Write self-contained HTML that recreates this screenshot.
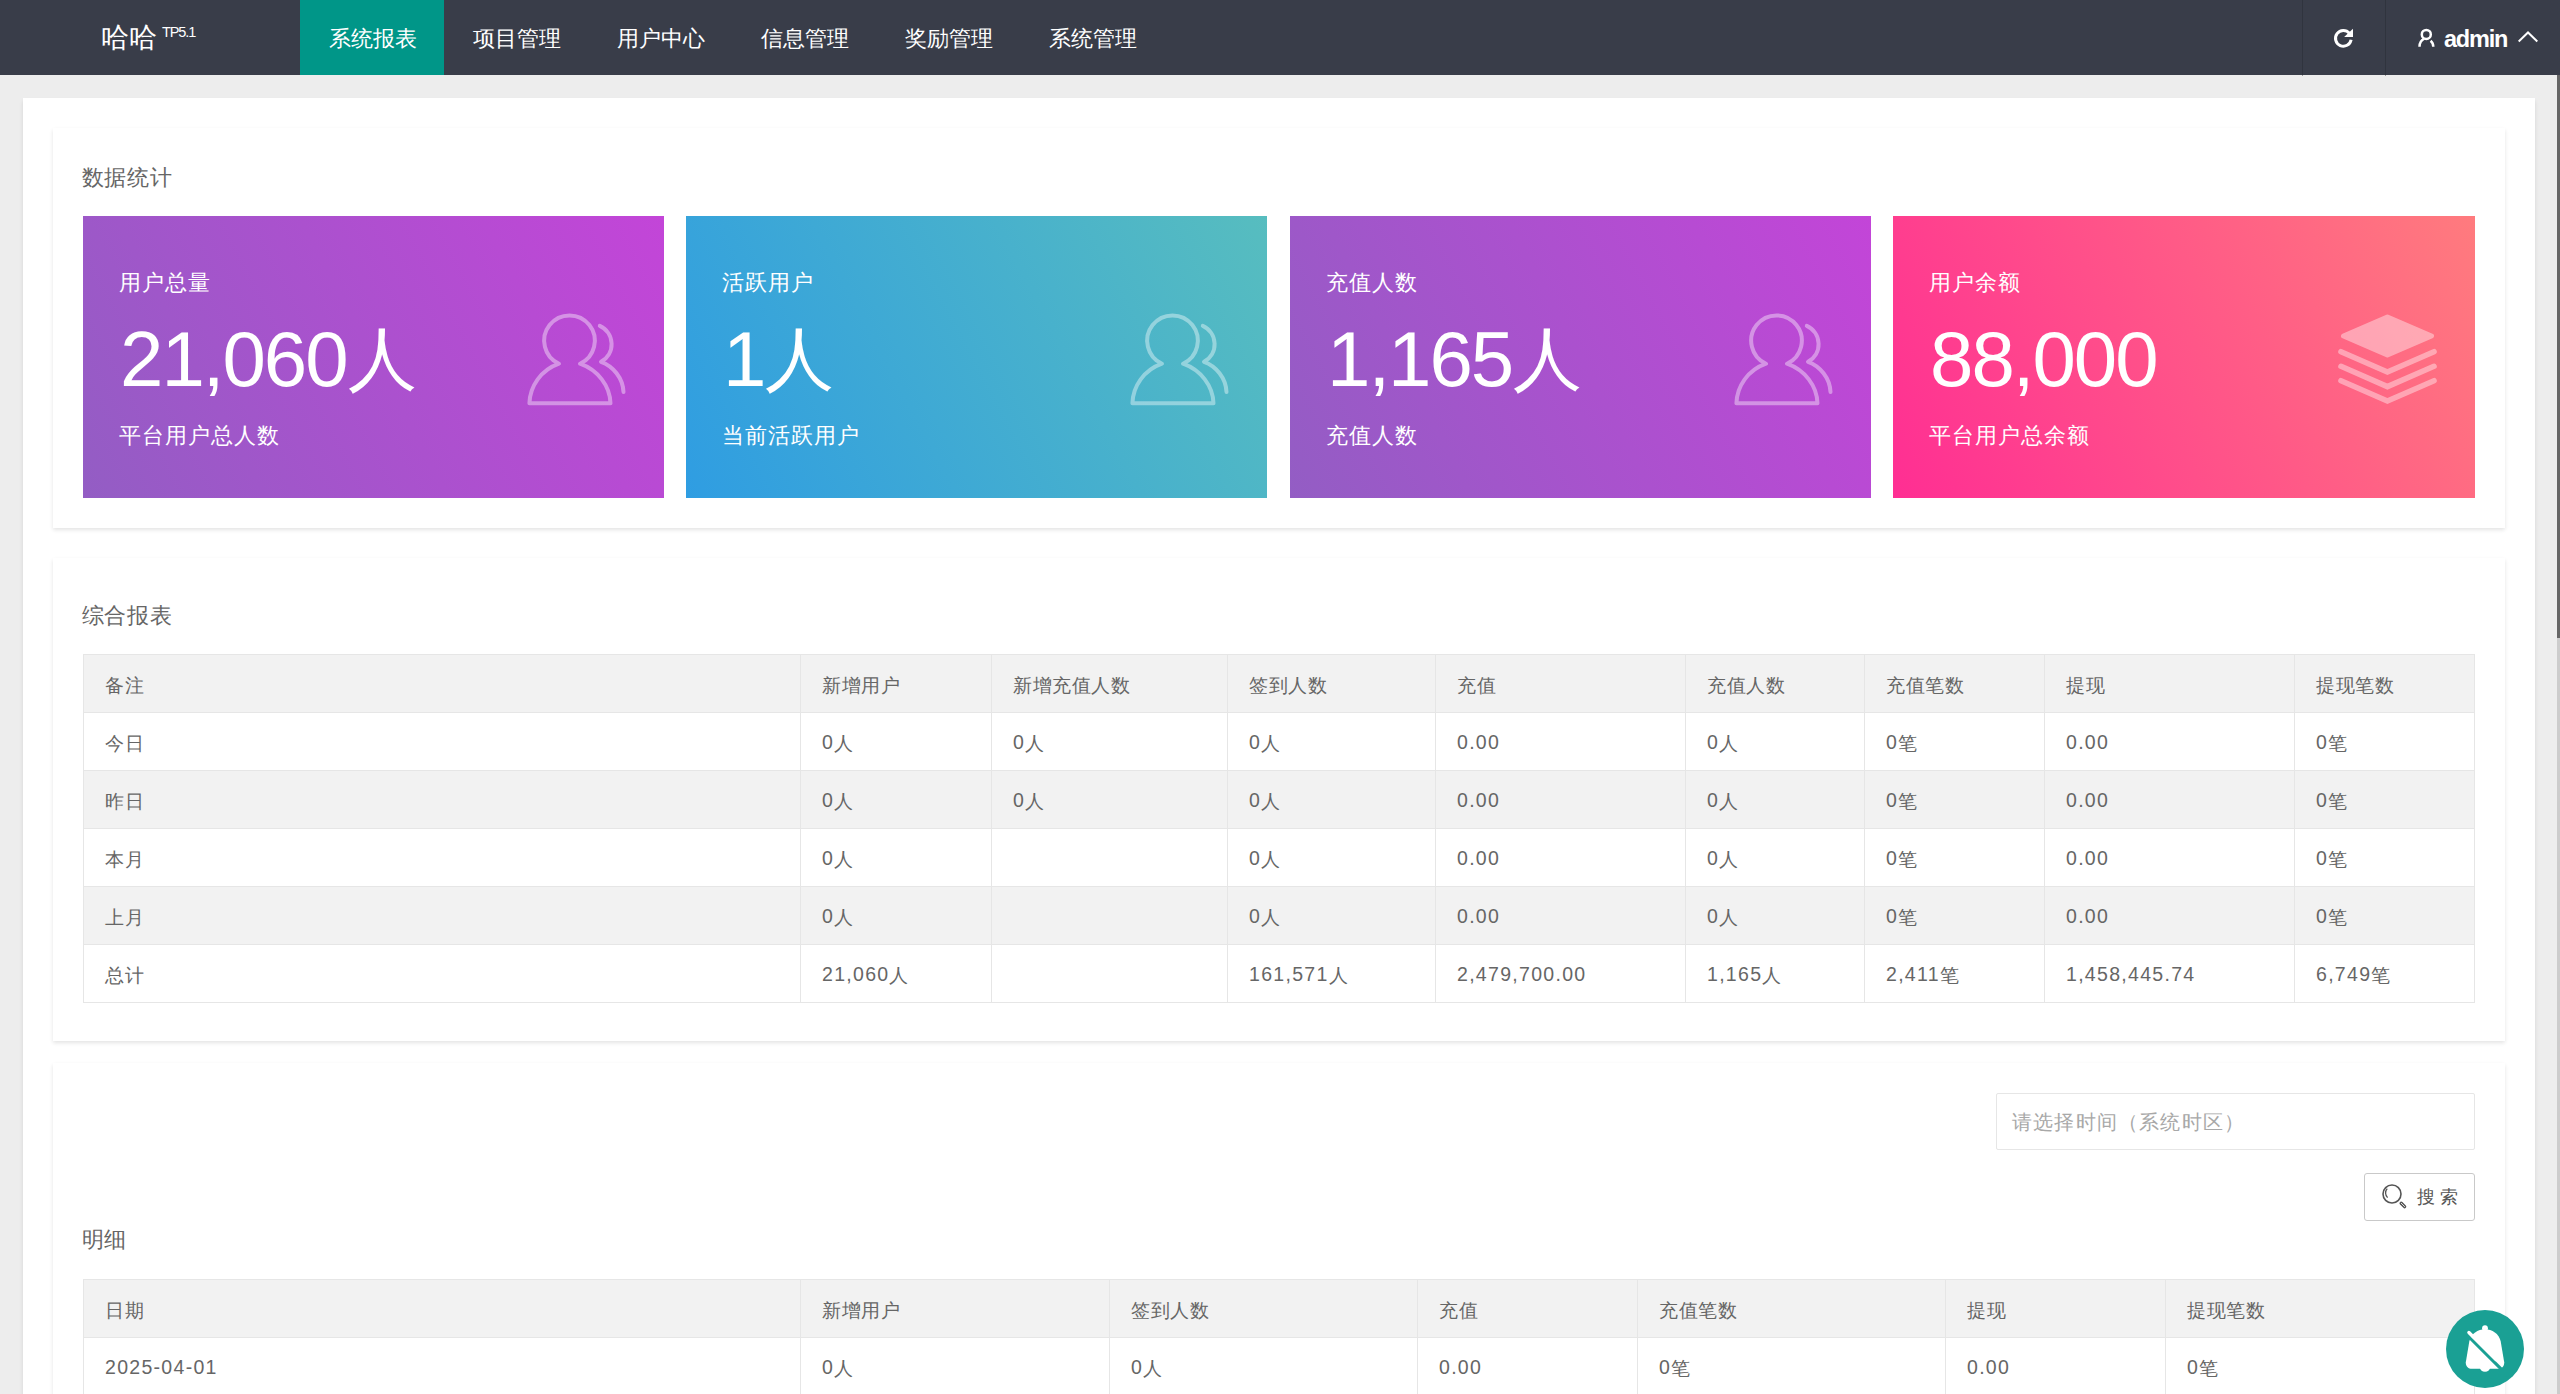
<!DOCTYPE html><html><head><meta charset="utf-8"><style>
*{margin:0;padding:0;box-sizing:border-box}
html,body{width:2560px;height:1394px;overflow:hidden;background:#EDEDED;font-family:"Liberation Sans",sans-serif;color:#666}
div{position:absolute;white-space:nowrap}
.hdr{left:0;top:0;width:2560px;height:75px;background:#393D49}
.logo{left:101px;top:20px;font-size:27.5px;line-height:36px;color:#fff}
.sup{left:162px;top:21.5px;font-size:14.5px;line-height:20px;color:#fff;letter-spacing:-1.1px}
.nav{top:0;height:75px;width:144px;color:#fff;font-size:21.5px;line-height:78px;padding-left:29px}
.on{background:#009688}
.sep{top:0;width:1px;height:75px;background:#30343E}
.cont{left:23px;top:98px;width:2512px;height:1400px;background:#fff;box-shadow:0 3px 4px rgba(0,0,0,.1)}
.card{left:53px;width:2452px;background:#fff;box-shadow:0 2px 4px rgba(0,0,0,.11)}
.ttl{left:81.5px;font-size:22px;line-height:30px;color:#666;letter-spacing:.8px}
.box{top:216px;width:581px;height:282px;color:#fff;overflow:hidden}
.l1{left:36px;top:51.5px;font-size:22px;line-height:30px;letter-spacing:1px}
.num{left:37px;top:93px;font-size:78px;line-height:100px;letter-spacing:-2px}
.ren{font-size:69px;letter-spacing:0;position:relative;top:-3px;margin-left:1px}
.l2{left:36px;top:204.5px;font-size:22px;line-height:30px;letter-spacing:1px}
.hl{height:1px;background:#E6E6E6}
.vl{width:1px;background:#E6E6E6}
.rg{background:#F2F2F2}
.tc{font-size:19px;letter-spacing:.5px;line-height:61px;height:57px;color:#666}
.dg{font-size:19.5px;letter-spacing:1.3px;position:relative;top:-1px}
</style></head><body>
<div class="hdr"></div>
<div class="logo">哈哈</div><div class="sup">TP5.1</div>
<div class="nav on" style="left:300px">系统报表</div>
<div class="nav" style="left:444px">项目管理</div>
<div class="nav" style="left:588px">用户中心</div>
<div class="nav" style="left:732px">信息管理</div>
<div class="nav" style="left:876px">奖励管理</div>
<div class="nav" style="left:1020px">系统管理</div>
<div class="sep" style="left:2302px"></div><div class="sep" style="left:2385px"></div>
<div style="left:2302px;top:75px;width:1px;height:1px;background:#9a9a9a"></div><div style="left:2385px;top:75px;width:1px;height:1px;background:#9a9a9a"></div>
<div class="cont"></div>
<div class="card" style="top:128px;height:400px"></div>
<div class="card" style="top:558px;height:483px"></div>
<div class="card" style="top:1063px;height:400px"></div>
<div class="ttl" style="top:163px">数据统计</div>
<div class="box" style="left:83px;background:linear-gradient(62deg,#935DC4,#C345D8)"><div class="l1">用户总量</div><div class="num">21,060<span class=ren>人</span></div><div class="l2">平台用户总人数</div></div>
<div class="box" style="left:686px;background:linear-gradient(62deg,#2F9DE2,#57BDBF)"><div class="l1">活跃用户</div><div class="num">1<span class=ren>人</span></div><div class="l2">当前活跃用户</div></div>
<div class="box" style="left:1290px;background:linear-gradient(62deg,#935DC4,#C345D8)"><div class="l1">充值人数</div><div class="num">1,165<span class=ren>人</span></div><div class="l2">充值人数</div></div>
<div class="box" style="left:1893px;width:582px;background:linear-gradient(62deg,#FF2E93,#FF7B7E)"><div class="l1">用户余额</div><div class="num">88,000</div><div class="l2">平台用户总余额</div></div>
<div class="ttl" style="top:601px">综合报表</div>
<div class="rg" style="left:83px;top:654px;width:2392px;height:58px"></div>
<div class="rg" style="left:83px;top:770px;width:2392px;height:58px"></div>
<div class="rg" style="left:83px;top:886px;width:2392px;height:58px"></div>
<div class="hl" style="left:83px;top:654px;width:2392px"></div>
<div class="hl" style="left:83px;top:712px;width:2392px"></div>
<div class="hl" style="left:83px;top:770px;width:2392px"></div>
<div class="hl" style="left:83px;top:828px;width:2392px"></div>
<div class="hl" style="left:83px;top:886px;width:2392px"></div>
<div class="hl" style="left:83px;top:944px;width:2392px"></div>
<div class="hl" style="left:83px;top:1002px;width:2392px"></div>
<div class="vl" style="left:83px;top:654px;height:349px"></div>
<div class="vl" style="left:800px;top:654px;height:349px"></div>
<div class="vl" style="left:991px;top:654px;height:349px"></div>
<div class="vl" style="left:1227px;top:654px;height:349px"></div>
<div class="vl" style="left:1435px;top:654px;height:349px"></div>
<div class="vl" style="left:1685px;top:654px;height:349px"></div>
<div class="vl" style="left:1864px;top:654px;height:349px"></div>
<div class="vl" style="left:2044px;top:654px;height:349px"></div>
<div class="vl" style="left:2294px;top:654px;height:349px"></div>
<div class="vl" style="left:2474px;top:654px;height:349px"></div>
<div class="tc" style="left:105px;top:655px">备注</div>
<div class="tc" style="left:822px;top:655px">新增用户</div>
<div class="tc" style="left:1013px;top:655px">新增充值人数</div>
<div class="tc" style="left:1249px;top:655px">签到人数</div>
<div class="tc" style="left:1457px;top:655px">充值</div>
<div class="tc" style="left:1707px;top:655px">充值人数</div>
<div class="tc" style="left:1886px;top:655px">充值笔数</div>
<div class="tc" style="left:2066px;top:655px">提现</div>
<div class="tc" style="left:2316px;top:655px">提现笔数</div>
<div class="tc" style="left:105px;top:713px">今日</div>
<div class="tc" style="left:822px;top:713px"><span class="dg">0</span>人</div>
<div class="tc" style="left:1013px;top:713px"><span class="dg">0</span>人</div>
<div class="tc" style="left:1249px;top:713px"><span class="dg">0</span>人</div>
<div class="tc" style="left:1457px;top:713px"><span class="dg">0.00</span></div>
<div class="tc" style="left:1707px;top:713px"><span class="dg">0</span>人</div>
<div class="tc" style="left:1886px;top:713px"><span class="dg">0</span>笔</div>
<div class="tc" style="left:2066px;top:713px"><span class="dg">0.00</span></div>
<div class="tc" style="left:2316px;top:713px"><span class="dg">0</span>笔</div>
<div class="tc" style="left:105px;top:771px">昨日</div>
<div class="tc" style="left:822px;top:771px"><span class="dg">0</span>人</div>
<div class="tc" style="left:1013px;top:771px"><span class="dg">0</span>人</div>
<div class="tc" style="left:1249px;top:771px"><span class="dg">0</span>人</div>
<div class="tc" style="left:1457px;top:771px"><span class="dg">0.00</span></div>
<div class="tc" style="left:1707px;top:771px"><span class="dg">0</span>人</div>
<div class="tc" style="left:1886px;top:771px"><span class="dg">0</span>笔</div>
<div class="tc" style="left:2066px;top:771px"><span class="dg">0.00</span></div>
<div class="tc" style="left:2316px;top:771px"><span class="dg">0</span>笔</div>
<div class="tc" style="left:105px;top:829px">本月</div>
<div class="tc" style="left:822px;top:829px"><span class="dg">0</span>人</div>
<div class="tc" style="left:1249px;top:829px"><span class="dg">0</span>人</div>
<div class="tc" style="left:1457px;top:829px"><span class="dg">0.00</span></div>
<div class="tc" style="left:1707px;top:829px"><span class="dg">0</span>人</div>
<div class="tc" style="left:1886px;top:829px"><span class="dg">0</span>笔</div>
<div class="tc" style="left:2066px;top:829px"><span class="dg">0.00</span></div>
<div class="tc" style="left:2316px;top:829px"><span class="dg">0</span>笔</div>
<div class="tc" style="left:105px;top:887px">上月</div>
<div class="tc" style="left:822px;top:887px"><span class="dg">0</span>人</div>
<div class="tc" style="left:1249px;top:887px"><span class="dg">0</span>人</div>
<div class="tc" style="left:1457px;top:887px"><span class="dg">0.00</span></div>
<div class="tc" style="left:1707px;top:887px"><span class="dg">0</span>人</div>
<div class="tc" style="left:1886px;top:887px"><span class="dg">0</span>笔</div>
<div class="tc" style="left:2066px;top:887px"><span class="dg">0.00</span></div>
<div class="tc" style="left:2316px;top:887px"><span class="dg">0</span>笔</div>
<div class="tc" style="left:105px;top:945px">总计</div>
<div class="tc" style="left:822px;top:945px"><span class="dg">21,060</span>人</div>
<div class="tc" style="left:1249px;top:945px"><span class="dg">161,571</span>人</div>
<div class="tc" style="left:1457px;top:945px"><span class="dg">2,479,700.00</span></div>
<div class="tc" style="left:1707px;top:945px"><span class="dg">1,165</span>人</div>
<div class="tc" style="left:1886px;top:945px"><span class="dg">2,411</span>笔</div>
<div class="tc" style="left:2066px;top:945px"><span class="dg">1,458,445.74</span></div>
<div class="tc" style="left:2316px;top:945px"><span class="dg">6,749</span>笔</div>
<div class="ttl" style="top:1225px">明细</div>
<div class="rg" style="left:83px;top:1279px;width:2392px;height:58px"></div>
<div class="hl" style="left:83px;top:1279px;width:2392px"></div>
<div class="hl" style="left:83px;top:1337px;width:2392px"></div>
<div class="vl" style="left:83px;top:1279px;height:116px"></div>
<div class="vl" style="left:800px;top:1279px;height:116px"></div>
<div class="vl" style="left:1109px;top:1279px;height:116px"></div>
<div class="vl" style="left:1417px;top:1279px;height:116px"></div>
<div class="vl" style="left:1637px;top:1279px;height:116px"></div>
<div class="vl" style="left:1945px;top:1279px;height:116px"></div>
<div class="vl" style="left:2165px;top:1279px;height:116px"></div>
<div class="vl" style="left:2474px;top:1279px;height:116px"></div>
<div class="tc" style="left:105px;top:1280px">日期</div>
<div class="tc" style="left:822px;top:1280px">新增用户</div>
<div class="tc" style="left:1131px;top:1280px">签到人数</div>
<div class="tc" style="left:1439px;top:1280px">充值</div>
<div class="tc" style="left:1659px;top:1280px">充值笔数</div>
<div class="tc" style="left:1967px;top:1280px">提现</div>
<div class="tc" style="left:2187px;top:1280px">提现笔数</div>
<div class="tc" style="left:105px;top:1338px"><span class="dg">2025-04-01</span></div>
<div class="tc" style="left:822px;top:1338px"><span class="dg">0</span>人</div>
<div class="tc" style="left:1131px;top:1338px"><span class="dg">0</span>人</div>
<div class="tc" style="left:1439px;top:1338px"><span class="dg">0.00</span></div>
<div class="tc" style="left:1659px;top:1338px"><span class="dg">0</span>笔</div>
<div class="tc" style="left:1967px;top:1338px"><span class="dg">0.00</span></div>
<div class="tc" style="left:2187px;top:1338px"><span class="dg">0</span>笔</div>
<svg style="position:absolute;left:0;top:0" width="2560" height="75"><path d="M2351.1,39.7 A7.85,7.85 0 1 1 2349.4,33.3" fill="none" stroke="#fff" stroke-width="3"/><path d="M2353,28.8 L2353,37.1 L2344.1,37.1 Z" fill="#fff"/><circle cx="2426.3" cy="34.4" r="4.5" fill="none" stroke="#fff" stroke-width="2.5"/><path d="M2419.5,46.8 C2419.5,43.2 2421.2,40.3 2424.2,38.7 M2430.6,40.7 C2432.4,42.2 2433.3,44.3 2433.3,46.8" fill="none" stroke="#fff" stroke-width="2.5"/><path d="M2518.7,41.5 L2528,32.5 L2537.3,41.5" fill="none" stroke="#fff" stroke-width="2"/></svg>
<div style="left:2444px;top:23.5px;font-size:23.5px;line-height:30px;font-weight:bold;color:#fff;letter-spacing:-1.2px">admin</div>
<svg style="position:absolute;left:83px;top:216px" width="581" height="282"><g fill="none" stroke="rgba(255,255,255,.4)" stroke-width="4" stroke-linecap="round" stroke-linejoin="round"><path d="M476,147.7 A25.3,25.3 0 1 1 497,147.7 C515,154 527,170 527.5,187.3 L446.4,187.3 C447,170 458,154 476,147.7 Z" /><path d="M516.8,109.9 A20,20 0 0 1 518,145.8 C530,150 540,162 540.5,176" /></g></svg>
<svg style="position:absolute;left:686px;top:216px" width="581" height="282"><g fill="none" stroke="rgba(255,255,255,.4)" stroke-width="4" stroke-linecap="round" stroke-linejoin="round"><path d="M476,147.7 A25.3,25.3 0 1 1 497,147.7 C515,154 527,170 527.5,187.3 L446.4,187.3 C447,170 458,154 476,147.7 Z" /><path d="M516.8,109.9 A20,20 0 0 1 518,145.8 C530,150 540,162 540.5,176" /></g></svg>
<svg style="position:absolute;left:1290px;top:216px" width="581" height="282"><g fill="none" stroke="rgba(255,255,255,.4)" stroke-width="4" stroke-linecap="round" stroke-linejoin="round"><path d="M476,147.7 A25.3,25.3 0 1 1 497,147.7 C515,154 527,170 527.5,187.3 L446.4,187.3 C447,170 458,154 476,147.7 Z" /><path d="M516.8,109.9 A20,20 0 0 1 518,145.8 C530,150 540,162 540.5,176" /></g></svg>
<svg style="position:absolute;left:1893px;top:216px" width="581" height="282"><g opacity=".4"><path d="M450.5,120 L494.4,101 L538.5,120 L494.4,139 Z" fill="#fff" stroke="#fff" stroke-width="5" stroke-linejoin="round"/><path d="M448,135.7 L494.4,156 L541,135.7 M448,150.3 L494.4,170.6 L541,150.3 M448,164.7 L494.4,185 L541,164.7" fill="none" stroke="#fff" stroke-width="5.6" stroke-linecap="round"/></g></svg>
<div style="left:1996px;top:1093px;width:479px;height:57px;border:1px solid #E6E6E6;border-radius:2px;background:#fff"></div>
<div style="left:2012px;top:1107px;font-size:20px;line-height:30px;color:#A8A8A8;letter-spacing:1.2px">请选择时间（系统时区）</div>
<div style="left:2364px;top:1173px;width:111px;height:48px;border:1px solid #C9C9C9;border-radius:3px;background:#fff"></div>
<svg style="position:absolute;left:2364px;top:1173px" width="111" height="48"><circle cx="28" cy="21" r="9" fill="none" stroke="#555" stroke-width="1.6"/><path d="M37.2,30.2 L40.6,33.6" stroke="#555" stroke-width="3.4" stroke-linecap="round"/><path d="M37.2,30.2 L40.6,33.6" stroke="#fff" stroke-width="0.8" stroke-linecap="round"/><path d="M23.2,15.6 A6.5,6.5 0 0 0 23.6,24.6" fill="none" stroke="#555" stroke-width="1.3"/></svg>
<div style="left:2417px;top:1182px;font-size:18px;line-height:30px;color:#555;letter-spacing:5.4px">搜索</div>
<svg style="position:absolute;left:2446px;top:1310px" width="78" height="78"><circle cx="39" cy="39" r="39" fill="#1AA094"/><circle cx="39" cy="18.2" r="2.9" fill="#fff"/><path d="M39,19.2 C46,19.2 53,23.5 54.7,31.4 L58.2,52.3 C58.5,55 56.5,58.7 53.5,58.7 L24.5,58.7 C21.5,58.7 19.5,55 19.8,52.3 L23.3,31.4 C25,23.5 32,19.2 39,19.2 Z" fill="#fff"/><circle cx="39" cy="56.5" r="5.3" fill="#fff"/><path d="M18,21.8 L62,65.8" stroke="#1AA094" stroke-width="3.2"/><path d="M22.9,22.5 L50,49.6" stroke="#fff" stroke-width="3.3" stroke-linecap="round"/></svg>
<div style="left:2557px;top:75px;width:3px;height:1319px;background:#CCC"></div>
<div style="left:2557px;top:75px;width:3px;height:563px;background:#666"></div>
</body></html>
